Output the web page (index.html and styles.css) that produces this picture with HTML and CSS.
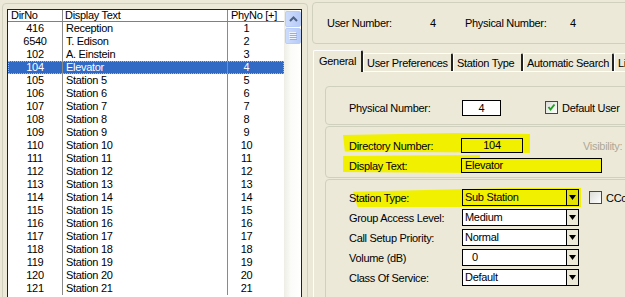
FILE: index.html
```html
<!DOCTYPE html>
<html lang="en">

<head>
    <meta charset="UTF-8">
    <meta name="viewport" content="width=device-width, initial-scale=1.0">
    <title>Users</title>
    <link rel="stylesheet" href="styles.css">
</head>

<body>
    <div class="window">
        <div class="list-group">
            <div class="list">
                <div class="list-main">
                    <div class="list-head">
                        <div class="c0">DirNo</div>
                        <div class="c1">Display Text</div>
                        <div class="c2">PhyNo [+]</div>
                    </div>
                    <div class="row"><div class="c0">416</div><div class="c1">Reception</div><div class="c2">1</div></div>
                    <div class="row"><div class="c0">6540</div><div class="c1">T. Edison</div><div class="c2">2</div></div>
                    <div class="row"><div class="c0">102</div><div class="c1">A. Einstein</div><div class="c2">3</div></div>
                    <div class="row sel"><div class="c0">104</div><div class="c1">Elevator</div><div class="c2">4</div></div>
                    <div class="row"><div class="c0">105</div><div class="c1">Station 5</div><div class="c2">5</div></div>
                    <div class="row"><div class="c0">106</div><div class="c1">Station 6</div><div class="c2">6</div></div>
                    <div class="row"><div class="c0">107</div><div class="c1">Station 7</div><div class="c2">7</div></div>
                    <div class="row"><div class="c0">108</div><div class="c1">Station 8</div><div class="c2">8</div></div>
                    <div class="row"><div class="c0">109</div><div class="c1">Station 9</div><div class="c2">9</div></div>
                    <div class="row"><div class="c0">110</div><div class="c1">Station 10</div><div class="c2">10</div></div>
                    <div class="row"><div class="c0">111</div><div class="c1">Station 11</div><div class="c2">11</div></div>
                    <div class="row"><div class="c0">112</div><div class="c1">Station 12</div><div class="c2">12</div></div>
                    <div class="row"><div class="c0">113</div><div class="c1">Station 13</div><div class="c2">13</div></div>
                    <div class="row"><div class="c0">114</div><div class="c1">Station 14</div><div class="c2">14</div></div>
                    <div class="row"><div class="c0">115</div><div class="c1">Station 15</div><div class="c2">15</div></div>
                    <div class="row"><div class="c0">116</div><div class="c1">Station 16</div><div class="c2">16</div></div>
                    <div class="row"><div class="c0">117</div><div class="c1">Station 17</div><div class="c2">17</div></div>
                    <div class="row"><div class="c0">118</div><div class="c1">Station 18</div><div class="c2">18</div></div>
                    <div class="row"><div class="c0">119</div><div class="c1">Station 19</div><div class="c2">19</div></div>
                    <div class="row"><div class="c0">120</div><div class="c1">Station 20</div><div class="c2">20</div></div>
                    <div class="row"><div class="c0">121</div><div class="c1">Station 21</div><div class="c2">21</div></div>
                </div>
                <div class="scrollbar">
                    <div class="sb-btn">
                        <svg width="9" height="6" viewBox="0 0 9 6"><path d="M1 5 L4.5 1.5 L8 5" fill="none" stroke="#4D6185" stroke-width="2"/></svg>
                    </div>
                    <div class="sb-thumb">
                        <svg width="8" height="8" viewBox="0 0 8 8">
                            <path d="M0 0.5h7M0 2.5h7M0 4.5h7M0 6.5h7" stroke="#EEF4FE" stroke-width="1"/>
                            <path d="M1 1.5h7M1 3.5h7M1 5.5h7M1 7.5h7" stroke="#8CB0F8" stroke-width="1"/>
                        </svg>
                    </div>
                </div>
            </div>
        </div>

        <div class="details">
            <div class="summary">
                <span class="sum-label">User Number:</span>
                <span class="sum-value">4</span>
                <span class="sum-label2">Physical Number:</span>
                <span>4</span>
            </div>

            <div class="tabs">
                <div class="tab active">General</div>
                <div class="tab w-pref">User Preferences</div>
                <div class="tab w-type">Station Type</div>
                <div class="tab w-auto">Automatic Search</div>
                <div class="tab w-last">Lines</div>
            </div>

            <div class="tab-panel">
                <div class="group g1">
                    <div class="field">
                        <span class="label">Physical Number:</span>
                        <span class="textbox phys">4</span>
                        <span class="check checked">
                            <svg width="11" height="11" viewBox="0 0 11 11"><path d="M2.5 5 L4.5 7.5 L8.5 2.5" fill="none" stroke="#21A121" stroke-width="2"/></svg>
                        </span>
                        <span class="check-text">Default User</span>
                    </div>
                </div>

                <div class="group g2">
                    <div class="field short hl hl-dir">
                        <span class="label">Directory Number:</span>
                        <span class="textbox yellow dirno">104</span>
                        <span class="muted">Visibility:</span>
                    </div>
                    <div class="field short hl hl-text">
                        <span class="label">Display Text:</span>
                        <span class="textbox yellow disp">Elevator</span>
                    </div>
                </div>

                <div class="group g3">
                    <div class="field hl hl-type">
                        <span class="label">Station Type:</span>
                        <span class="combo yellow"><span class="combo-text">Sub Station</span><span class="drop"><svg width="7" height="5" viewBox="0 0 7 5"><path d="M0 0H7L3.5 5Z"/></svg></span></span>
                        <span class="check cco"></span>
                        <span class="check-text">CCo</span>
                    </div>
                    <div class="field">
                        <span class="label">Group Access Level:</span>
                        <span class="combo"><span class="combo-text">Medium</span><span class="drop"><svg width="7" height="5" viewBox="0 0 7 5"><path d="M0 0H7L3.5 5Z"/></svg></span></span>
                    </div>
                    <div class="field">
                        <span class="label">Call Setup Priority:</span>
                        <span class="combo"><span class="combo-text">Normal</span><span class="drop"><svg width="7" height="5" viewBox="0 0 7 5"><path d="M0 0H7L3.5 5Z"/></svg></span></span>
                    </div>
                    <div class="field">
                        <span class="label">Volume (dB)</span>
                        <span class="combo"><span class="combo-text indent">0</span><span class="drop"><svg width="7" height="5" viewBox="0 0 7 5"><path d="M0 0H7L3.5 5Z"/></svg></span></span>
                    </div>
                    <div class="field">
                        <span class="label">Class Of Service:</span>
                        <span class="combo"><span class="combo-text">Default</span><span class="drop"><svg width="7" height="5" viewBox="0 0 7 5"><path d="M0 0H7L3.5 5Z"/></svg></span></span>
                    </div>
                </div>
            </div>
        </div>
    </div>
</body>

</html>
```

FILE: styles.css
```css
* {
    box-sizing: border-box;
}

body {
    margin: 0;
    width: 625px;
    height: 297px;
    overflow: hidden;
    background: #ECE9D8;
    font: 11px "Liberation Sans", Arial, sans-serif;
    letter-spacing: -0.3px;
    color: #000;
}

.window {
    display: flex;
    height: 297px;
}

/* left: user list */

.list-group {
    flex: none;
    width: 306px;
    height: 310px;
    margin: 3px 0 0 2px;
    padding: 5px 5px 0 4px;
    border: 1px solid #D0D0BF;
    border-radius: 4px;
}

.list {
    display: flex;
    height: 300px;
    background: #fff;
    border: 1px solid #222;
}

.list-main {
    flex: 1;
    overflow: hidden;
}

.list-head,
.row {
    display: flex;
    white-space: nowrap;
}

.list-head {
    height: 12px;
    line-height: 11px;
    border-bottom: 1px solid #808080;
}

.row {
    height: 13px;
    line-height: 13px;
}

.c0 {
    flex: none;
    width: 55px;
    border-right: 1px solid #8a8a8a;
    text-align: center;
}

.c1 {
    flex: none;
    width: 165px;
    padding-left: 3px;
    border-right: 1px solid #8a8a8a;
}

.c2 {
    flex: 1;
    text-align: center;
    padding-right: 19px;
}

.list-head .c0 {
    text-align: left;
    padding-left: 3px;
}

.list-head .c1 {
    padding-left: 2px;
}

.list-head .c2 {
    text-align: left;
    padding-left: 3px;
    padding-right: 0;
}

.row.sel {
    background: #316AC5;
    color: #fff;
    outline: 1px dotted #D8B070;
    outline-offset: -1px;
}

.scrollbar {
    flex: none;
    width: 17px;
    padding: 1px 0 0 1px;
    background: linear-gradient(to right, #EEEDE5, #FBFBF8 40%, #fff);
}

.sb-btn,
.sb-thumb {
    width: 16px;
    height: 16px;
    border: 1px solid #B9CDF7;
    border-radius: 2px;
    background: linear-gradient(to right, #CCDCFC, #B7CBF7);
    display: flex;
    align-items: center;
    justify-content: center;
}

.sb-thumb {
    margin-top: 1px;
}

/* right: details */

.details {
    flex: none;
    width: 320px;
    margin-left: 4px;
    display: flex;
    flex-direction: column;
}

.summary {
    flex: none;
    height: 42px;
    width: 330px;
    margin-top: 2px;
    padding-left: 14px;
    border: 1px solid #D0D0BF;
    border-radius: 4px;
    display: flex;
    align-items: center;
}

.sum-label {
    width: 103px;
}

.sum-value {
    width: 35px;
}

.sum-label2 {
    width: 105px;
}

.tabs {
    flex: none;
    display: flex;
    align-items: flex-end;
    height: 21px;
    margin-top: 6px;
    padding-left: 1px;
    white-space: nowrap;
}

.tab {
    flex: none;
    height: 18px;
    line-height: 18px;
    padding-left: 3px;
    border: 1px solid #fff;
    border-right: 2px solid #222;
    border-bottom: none;
    border-radius: 2px 2px 0 0;
    overflow: hidden;
}

.tab.active {
    width: 50px;
    height: 22px;
    line-height: 20px;
    margin-bottom: -1px;
    padding-left: 5px;
    background: #ECE9D8;
    position: relative;
    z-index: 1;
}

.w-pref {
    width: 90px;
}

.w-type {
    width: 70px;
}

.w-auto {
    width: 91px;
}

.w-last {
    width: 60px;
}

.tab-panel {
    flex: 1;
    margin-left: 1px;
    padding: 14px 0 0 11px;
    border-top: 1px solid #fff;
    border-left: 1px solid #fff;
}

.group {
    width: 320px;
    border: 1px solid #D0D0BF;
    border-radius: 4px;
    padding-left: 23px;
}

.g1 {
    height: 39px;
    padding-top: 12px;
}

.g2 {
    height: 52px;
    margin-top: 1px;
    padding-top: 11px;
}

.g3 {
    height: 130px;
    margin-top: 1px;
    padding-top: 9px;
}

.field {
    display: flex;
    align-items: center;
    height: 17px;
    margin-bottom: 3px;
    white-space: nowrap;
}

.field.short {
    height: 15px;
    margin-bottom: 5px;
}

.label {
    flex: none;
    width: 113px;
}

.field.short .label {
    width: 112px;
}

.textbox {
    flex: none;
    height: 16px;
    line-height: 14px;
    border: 1px solid #000;
    background: #fff;
}

.field.short .textbox {
    height: 15px;
    line-height: 13px;
}

.phys {
    width: 39px;
    text-align: center;
}

.dirno {
    width: 62px;
    text-align: center;
}

.disp {
    width: 141px;
    padding-left: 3px;
}

.yellow {
    background: #F0F000;
}

.muted {
    margin-left: 60px;
    color: #ACA899;
}

/* highlighter strokes behind the marked fields */

.hl {
    position: relative;
    isolation: isolate;
}

.hl::before {
    content: "";
    position: absolute;
    z-index: -1;
    background: #F0F000;
}

.hl-dir::before {
    left: -6px;
    top: -5px;
    width: 187px;
    height: 20px;
    clip-path: polygon(0 10%, 60% 0, 100% 5%, 100% 100%, 1% 92%);
}

.hl-text::before {
    left: -6px;
    top: -3px;
    width: 137px;
    height: 18px;
    clip-path: polygon(0 5%, 100% 0, 100% 100%, 0 95%);
}

.hl-type::before {
    left: 4px;
    top: -1px;
    width: 228px;
    height: 19px;
    clip-path: polygon(0 20%, 70% 0, 100% 0, 100% 100%, 2% 100%);
}

.check {
    flex: none;
    width: 13px;
    height: 13px;
    margin-left: 44px;
    border: 1px solid #1C5180;
    background: linear-gradient(135deg, #DCDCD7, #fff);
    display: flex;
    align-items: center;
    justify-content: center;
}

.check.cco {
    margin-left: 10px;
}

.check-text {
    margin-left: 4px;
}

.combo {
    flex: none;
    display: flex;
    width: 117px;
    height: 17px;
    line-height: 15px;
    border: 1px solid #000;
    background: #fff;
}

.combo.yellow {
    background: #F0F000;
}

.combo-text {
    flex: 1;
    padding-left: 2px;
}

.combo-text.indent {
    padding-left: 9px;
}

.drop {
    flex: none;
    width: 12px;
    border-left: 1px solid #000;
    background: #ECE9D8;
    display: flex;
    align-items: center;
    justify-content: center;
}

.combo.yellow .drop {
    background: #E4E200;
}
```
